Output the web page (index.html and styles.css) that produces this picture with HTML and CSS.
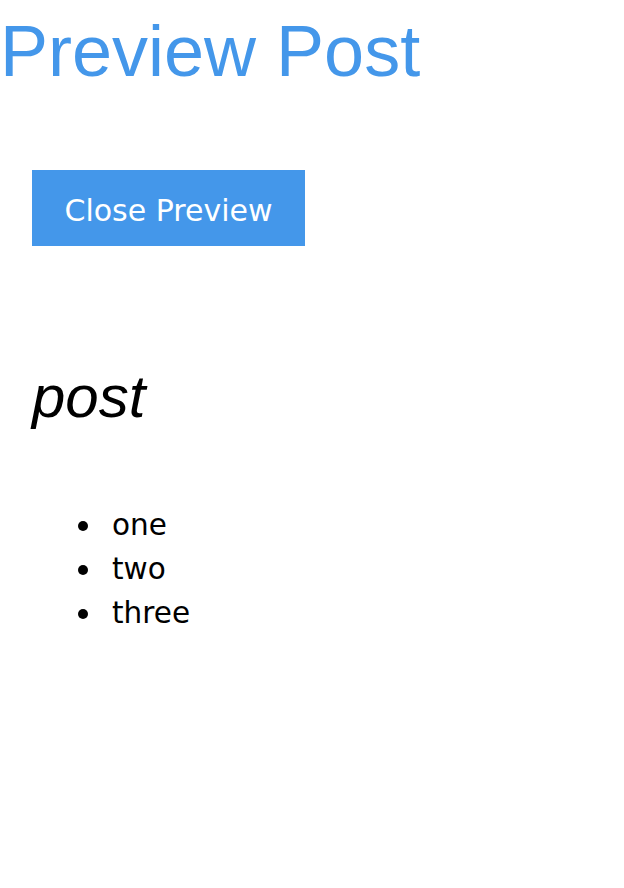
FILE: index.html
```html
<!DOCTYPE html>
<html>
<head>
<meta charset="utf-8">
<link rel="stylesheet" href="styles.css">
</head>
<body>
<h1 class="title">Preview Post</h1>
<div class="content">
  <button class="close-btn">Close Preview</button>
  <h2 class="post-title">post</h2>
  <ul class="post-list">
    <li>one</li>
    <li>two</li>
    <li>three</li>
  </ul>
</div>
</body>
</html>
```
FILE: styles.css
```css
html, body {
  margin: 0;
  padding: 0;
  background: #fff;
}
.title {
  margin: 0;
  padding-top: 10px;
  font-family: "Liberation Sans", Arial, sans-serif;
  font-weight: normal;
  font-size: 72px;
  line-height: 83px;
  color: #4497ea;
}
.content {
  padding: 0 32px;
}
.close-btn {
  display: block;
  margin-top: 77px;
  border: none;
  background: #4497ea;
  color: #fff;
  font-family: "DejaVu Sans", Verdana, sans-serif;
  font-size: 30px;
  padding: 4px 0 0;
  height: 76px;
  width: 273px;
  text-align: center;
}
.post-title {
  margin: 116px 0 0;
  font-family: "Liberation Sans", Arial, sans-serif;
  font-style: italic;
  font-weight: normal;
  font-size: 60px;
  line-height: 69px;
}
.post-list {
  margin: 72px 0 0;
  padding-left: 46px;
  list-style: none;
  font-family: "DejaVu Sans", Verdana, sans-serif;
  font-size: 29.5px;
  line-height: 44px;
}
.post-list li {
  display: flex;
  align-items: center;
}
.post-list li::before {
  content: "";
  flex: none;
  width: 10px;
  height: 10px;
  border-radius: 50%;
  background: #000;
  margin-right: 24px;
  margin-top: 1px;
}
```
